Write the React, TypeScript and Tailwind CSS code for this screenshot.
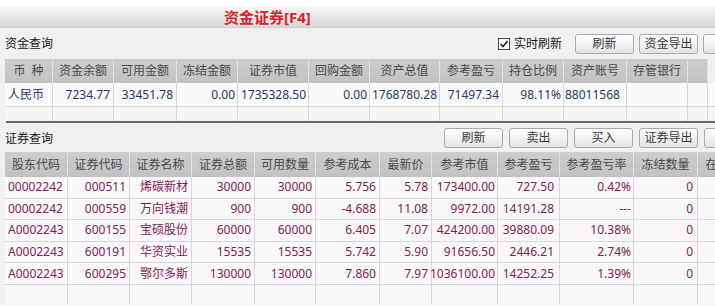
import React from "react";

type Col = { h: string; w: string; a: string };

const t1Cols: Col[] = [
  { h: "币  种", w: "w-[48px]", a: "justify-start pl-[3px]" },
  { h: "资金余额", w: "w-[61px]", a: "justify-end pr-[3px]" },
  { h: "可用金额", w: "w-[63px]", a: "justify-end pr-[3px]" },
  { h: "冻结金额", w: "w-[61px]", a: "justify-end pr-[2px]" },
  { h: "证券市值", w: "w-[71px]", a: "justify-end pr-[2px]" },
  { h: "回购金额", w: "w-[61px]", a: "justify-end pr-[2px]" },
  { h: "资产总值", w: "w-[70px]", a: "justify-end pr-[2px]" },
  { h: "参考盈亏", w: "w-[63px]", a: "justify-end pr-[3px]" },
  { h: "持仓比例", w: "w-[61px]", a: "justify-end pr-[2px]" },
  { h: "资产账号", w: "w-[63px]", a: "justify-start pl-[1px]" },
  { h: "存管银行", w: "w-[61px]", a: "justify-end pr-[2px]" },
  { h: "", w: "w-[20px]", a: "justify-end" },
];

const t1Row = [
  "人民币",
  "7234.77",
  "33451.78",
  "0.00",
  "1735328.50",
  "0.00",
  "1768780.28",
  "71497.34",
  "98.11%",
  "88011568",
  "",
  "",
];

const t2Cols: Col[] = [
  { h: "股东代码", w: "w-[63px]", a: "justify-start pl-[3px]" },
  { h: "证券代码", w: "w-[62px]", a: "justify-end pr-[3px]" },
  { h: "证券名称", w: "w-[62px]", a: "justify-end pr-[3px]" },
  { h: "证券总额", w: "w-[63px]", a: "justify-end pr-[3px]" },
  { h: "可用数量", w: "w-[61px]", a: "justify-end pr-[3px]" },
  { h: "参考成本", w: "w-[64px]", a: "justify-end pr-[3px]" },
  { h: "最新价", w: "w-[52px]", a: "justify-end pr-[3px]" },
  { h: "参考市值", w: "w-[66px]", a: "justify-end pr-[2px]" },
  { h: "参考盈亏", w: "w-[62px]", a: "justify-end pr-[5px]" },
  { h: "参考盈亏率", w: "w-[74px]", a: "justify-end pr-[2px]" },
  { h: "冻结数量", w: "w-[64px]", a: "justify-end pr-[4px]" },
  { h: "在途数量", w: "w-[64px]", a: "justify-start pl-[3px]" },
];

const t2Rows = [
  ["00002242", "000511", "烯碳新材", "30000", "30000", "5.756", "5.78", "173400.00", "727.50", "0.42%", "0", ""],
  ["00002242", "000559", "万向钱潮", "900", "900", "-4.688", "11.08", "9972.00", "14191.28", "---", "0", ""],
  ["A0002243", "600155", "宝硕股份", "60000", "60000", "6.405", "7.07", "424200.00", "39880.09", "10.38%", "0", ""],
  ["A0002243", "600191", "华资实业", "15535", "15535", "5.742", "5.90", "91656.50", "2446.21", "2.74%", "0", ""],
  ["A0002243", "600295", "鄂尔多斯", "130000", "130000", "7.860", "7.97", "1036100.00", "14252.25", "1.39%", "0", ""],
];

function Btn({ label }: { label: string }) {
  return (
    <div className="w-[59px] h-[20px] shrink-0 flex items-center justify-center rounded-[3px] border border-[#a9a9a9] bg-linear-to-b from-[#ffffff] to-[#e4e4e4] text-[#3a3a3a] shadow-[inset_0_1px_0_#ffffff]">
      {label}
    </div>
  );
}

function HeaderRow({ cols, h }: { cols: Col[]; h: string }) {
  return (
    <div className={`flex ${h} bg-linear-to-b from-[#cdcdcd] to-[#c1c1c1] text-[#4a4a4a]`}>
      {cols.map((c, i) => (
        <div
          key={i}
          className={`${c.w} shrink-0 h-full flex items-center justify-center whitespace-pre overflow-hidden border-r border-[#e2e2e2]`}
        >
          {c.h}
        </div>
      ))}
    </div>
  );
}

export default function App() {
  return (
    <div className="w-[715px] h-[308px] overflow-hidden bg-[#f0f0f0] text-[12px] leading-none font-['Noto_Sans','Noto_Sans_CJK_SC',sans-serif]">
      {/* top white strip */}
      <div className="h-[7px] bg-white" />
      {/* title bar */}
      <div className="h-[21px] flex items-center pl-[224px] bg-linear-to-b from-[#f6f6f6] to-[#d8d8d8] border-b border-[#cfcfcf]">
        <span className="text-[15px] font-bold text-[#d6252b]">资金证券[F4]</span>
      </div>

      {/* section 1 header */}
      <div className="h-[31px] flex items-center pl-[5px] overflow-hidden">
        <span className="text-[#1a1a1a] mt-[1px]">资金查询</span>
        <div className="flex-1" />
        <div className="flex items-center mr-[13px]">
          <div className="w-[12px] h-[12px] border border-[#4a4a4a] bg-white flex items-center justify-center mr-[4px]">
            <svg width="10" height="10" viewBox="0 0 10 10">
              <path d="M1.5 5 L4 7.5 L8.5 2" fill="none" stroke="#222" strokeWidth="1.6" />
            </svg>
          </div>
          <span className="text-[#1a1a1a]">实时刷新</span>
        </div>
        <div className="flex gap-[5px] -mr-[47px]">
          <Btn label="刷新" />
          <Btn label="资金导出" />
          <Btn label="" />
        </div>
      </div>

      {/* table 1 */}
      <div className="ml-[5px]">
        <div className="w-[703px]">
          <HeaderRow cols={t1Cols} h="h-[24px]" />
        </div>
        <div className="flex h-[24px] bg-[#f9f9f9] text-[#27396a] border-b border-[#d6d6d6]">
          {t1Cols.map((c, i) => (
            <div
              key={i}
              className={`${c.w} shrink-0 h-full flex items-center ${c.a} border-r border-[#d6d6d6]`}
            >
              {t1Row[i]}
            </div>
          ))}
        </div>
        <div className="flex h-[14px] bg-[#f5f5f5]">
          {t1Cols.map((c, i) => (
            <div key={i} className={`${c.w} shrink-0 h-full border-r border-[#d6d6d6]`} />
          ))}
        </div>
      </div>

      {/* splitter */}
      <div className="ml-[6px] h-[2px] bg-[#6b6b6b]" />

      {/* section 2 header */}
      <div className="h-[29px] flex items-center pl-[5px] overflow-hidden">
        <span className="text-[#1a1a1a] mt-[2px]">证券查询</span>
        <div className="flex-1" />
        <div className="flex gap-[6px] -mr-[48px]">
          <Btn label="刷新" />
          <Btn label="卖出" />
          <Btn label="买入" />
          <Btn label="证券导出" />
          <Btn label="" />
        </div>
      </div>

      {/* table 2 */}
      <div className="ml-[5px] overflow-hidden">
        <HeaderRow cols={t2Cols} h="h-[25px]" />
        {t2Rows.map((r, ri) => (
          <div
            key={ri}
            className="flex h-[21.6px] bg-[#fbf8fa] text-[#7a2452] border-b border-[#d9d6d8]"
          >
            {t2Cols.map((c, i) => (
              <div
                key={i}
                className={`${c.w} shrink-0 h-full flex items-center ${c.a} border-r border-[#d9d6d8]`}
              >
                {r[i]}
              </div>
            ))}
          </div>
        ))}
        <div className="flex h-[20px] bg-[#f6f6f6]">
          {t2Cols.map((c, i) => (
            <div key={i} className={`${c.w} shrink-0 h-full border-r border-[#d6d6d6]`} />
          ))}
        </div>
      </div>
      <div className="h-[4px] bg-white" />
    </div>
  );
}
